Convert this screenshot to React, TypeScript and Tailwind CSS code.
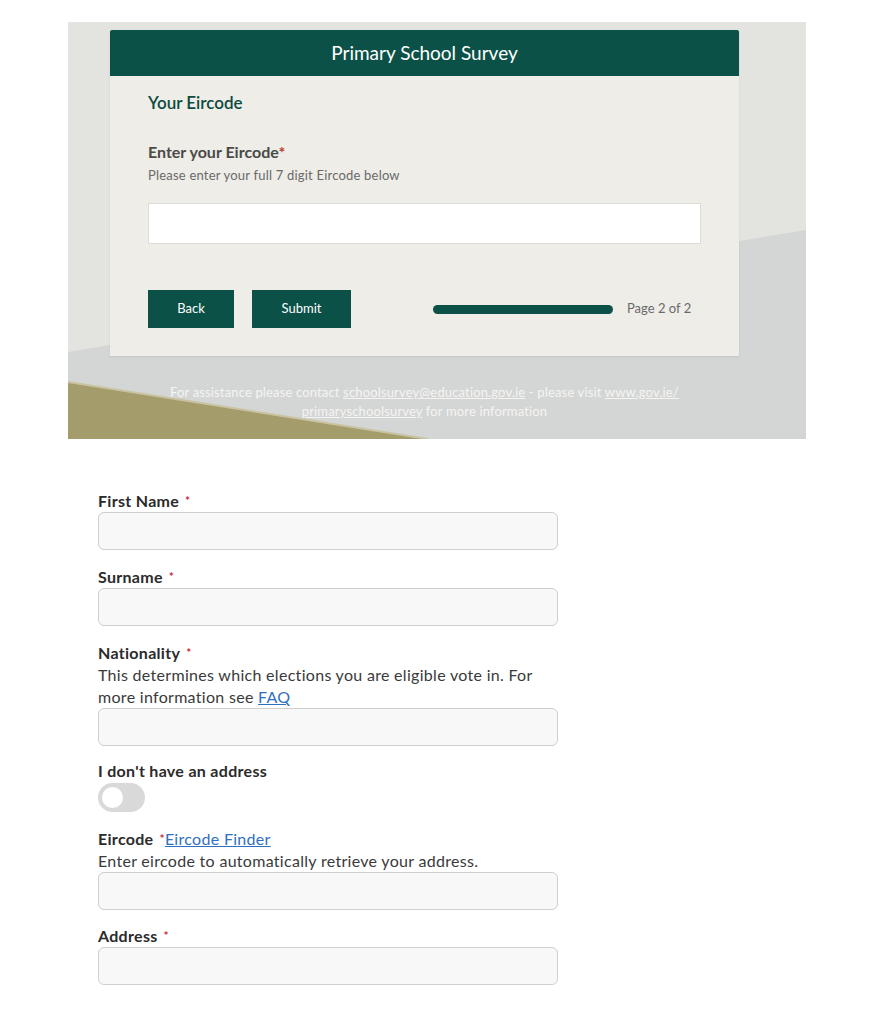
import React from 'react';

const GREEN = 'bg-[#0b5147]';

function Req() {
  return <sup className="ml-[6px] text-[12px] text-[#c8283b] relative -top-[2px]">*</sup>;
}

function Field({ children }: { children: React.ReactNode }) {
  return <div className="flex flex-col">{children}</div>;
}

function TextBox() {
  return <input type="text" className="w-[460px] h-[38px] rounded-[6px] border border-[#cfcfcf] bg-[#f8f8f8] px-3 outline-none" />;
}

const LABEL = 'text-[16px] leading-[22px] font-bold tracking-[0.3px]';
const HELP = 'text-[16px] leading-[22px] text-[#3a3a3a] tracking-[0.3px]';

function SurveyCard() {
  return (
    <div className="relative w-[738px] h-[417px] bg-[#e3e3df] overflow-hidden">
      {/* backdrop shapes */}
      <svg className="absolute inset-0" width="738" height="417" viewBox="0 0 738 417">
        <polygon points="0,330 738,208 738,417 0,417" fill="#d4d6d5" />
        <polygon points="0,360 360,417 0,417" fill="#a59c6b" />
        <line x1="0" y1="360" x2="360" y2="417" stroke="#c9c3a2" strokeWidth="2" />
      </svg>

      <div className="relative pt-[8px] pl-[42px] font-['Lato',sans-serif]">
        <div className="w-[629px] shadow-[0_1px_2px_rgba(0,0,0,0.08)]">
          <div className={`${GREEN} h-[46px] rounded-t-[2px] flex items-center justify-center text-white text-[19px]`}>
            Primary School Survey
          </div>
          <div className="bg-[#eeede8] h-[280px] pl-[38px] pr-[38px] pt-[17px]">
            <h2 className="text-[17px] leading-[20px] font-semibold text-[#0d4a3e]">Your Eircode</h2>
            <div className="mt-[29px] text-[16px] leading-[20px] font-bold text-[#4a4a48]">
              Enter your Eircode<span className="text-[#c0392b]">*</span>
            </div>
            <div className="mt-[5px] text-[13px] leading-[16px] tracking-[0.2px] text-[#6a6a68]">Please enter your full 7 digit Eircode below</div>
            <input type="text" className="mt-[20px] w-[553px] h-[41px] bg-white border border-[#dddcd6] outline-none" />
            <div className="mt-[46px] flex items-center">
              <button className={`${GREEN} w-[86px] h-[38px] text-white text-[13px]`}>Back</button>
              <button className={`${GREEN} ml-[18px] w-[99px] h-[38px] text-white text-[13px]`}>Submit</button>
              <div className={`${GREEN} ml-[82px] w-[180px] h-[9px] rounded-full`} />
              <span className="ml-[14px] text-[13px] text-[#6a6a68]">Page 2 of 2</span>
            </div>
          </div>
        </div>
        <p className="mt-[27px] w-[629px] text-center text-[13px] leading-[19px] tracking-[0.15px] text-[#f4f4f2]">
          For assistance please contact <a className="underline">schoolsurvey@education.gov.ie</a> - please visit{' '}
          <a className="underline">www.gov.ie/<br />primaryschoolsurvey</a> for more information
        </p>
      </div>
    </div>
  );
}

export default function App() {
  return (
    <div className="bg-white min-h-[1024px] font-['Lato',sans-serif]">
      <div className="pt-[22px] pl-[68px]">
        <SurveyCard />
      </div>

      <form className="pl-[98px] pt-[51px] text-[#2b2b2b]">
        <Field>
          <label className={LABEL}>First Name<Req /></label>
          <TextBox />
        </Field>
        <div className="mt-[16px]">
          <Field>
            <label className={LABEL}>Surname<Req /></label>
            <TextBox />
          </Field>
        </div>
        <div className="mt-[16px]">
          <Field>
            <label className={LABEL}>Nationality<Req /></label>
            <p className={`w-[450px] ${HELP}`}>
              This determines which elections you are eligible vote in. For more information see{' '}
              <a className="text-[#2f6fc0] underline">FAQ</a>
            </p>
            <TextBox />
          </Field>
        </div>
        <div className="mt-[14px]">
          <label className={`block ${LABEL}`}>I don't have an address</label>
          <div className="mt-[1px] w-[47px] h-[29px] rounded-full bg-[#d9d9d9] flex items-center pl-[4px]">
            <div className="w-[21px] h-[21px] rounded-full bg-white" />
          </div>
        </div>
        <div className="mt-[16px]">
          <Field>
            <label className={LABEL}>
              Eircode<sup className="ml-[6px] text-[12px] text-[#c8283b] relative -top-[2px]">*</sup>
              <a className="font-normal text-[#2f6fc0] underline">Eircode Finder</a>
            </label>
            <p className={HELP}>Enter eircode to automatically retrieve your address.</p>
            <TextBox />
          </Field>
        </div>
        <div className="mt-[15px]">
          <Field>
            <label className={LABEL}>Address<Req /></label>
            <TextBox />
          </Field>
        </div>
      </form>
    </div>
  );
}
